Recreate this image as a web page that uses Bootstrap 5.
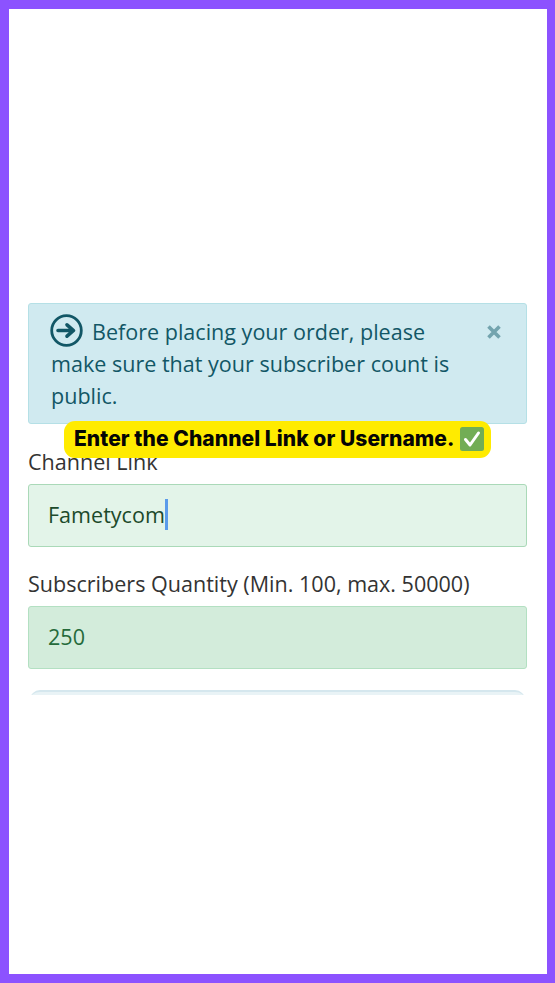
<!DOCTYPE html>
<html lang="en">
<head>
<meta charset="utf-8">
<title>Order form</title>
<link href="https://cdn.jsdelivr.net/npm/bootstrap@5.3.0/dist/css/bootstrap.min.css" rel="stylesheet">
<style>
html,body{height:100%;margin:0;background:#fff}
body{font-family:"Open Sans","Liberation Sans",sans-serif;overflow:hidden}
.frame{height:983px;border:9px solid #8c52ff;border-right-width:8px;padding:294px 20px 0 19px;position:relative;background:#fff}
.notice{height:121px;margin:0 0 24px;padding:10px 22px 0;border:1px solid #b5e0e6;border-radius:3px;background:#d0eaf0;color:#125766;font-size:21.55px;line-height:32px;position:relative}
.notice-icon{width:33px;height:33px;vertical-align:-7px;margin-right:9px;margin-left:-1px}
.notice-close{position:absolute;right:24px;top:16px;width:16px;height:24px;padding:0;border:0;background:none;display:flex;align-items:center}
.notice-text{max-width:410px}
.tip{position:absolute;left:55px;top:412px;width:427px;height:37px;background:#ffeb00;border-radius:11px;color:#050505;font-family:Inter,"Liberation Sans",sans-serif;font-weight:800;font-size:21px;letter-spacing:.06px;padding:0 0 1px 10px;display:flex;align-items:center;gap:5px;white-space:nowrap}
.field-label{display:block;color:#333;font-size:21.55px;line-height:28px;margin:0 0 8px}
.field{display:block;width:100%;height:63px;border-radius:3px;padding:0 19px;font-size:21.55px;line-height:60px}
.field-a{background:#e3f4e9;border:1.5px solid #aad9b8;color:#1c4a2b;margin-bottom:23px}
.field-b{background:#d3ecdb;border:1.5px solid #b3e0c2;color:#256a3a}
.caret-mark{display:inline-block;width:3px;height:31px;background:#5b9bea;vertical-align:-7px}
.clip-box{height:5px;margin-top:21px;padding:0 2px;overflow:hidden}
.clip-box>div{height:30px;border-radius:10px;background:#e9f3f6;border-top:2px solid #d5e7ee}
</style>
</head>
<body>
<div class="frame">
  <div class="alert notice" role="alert">
    <div class="notice-text"><svg class="notice-icon" viewBox="0 0 33 33"><circle cx="16.5" cy="16.5" r="14.8" fill="none" stroke="#125766" stroke-width="2.8"/><path d="M8 16.5H22M17 10.8L23.5 16.5L17 22.2" fill="none" stroke="#125766" stroke-width="3.6" stroke-linecap="round" stroke-linejoin="round"/></svg>Before placing your order, please make sure that your subscriber count is public.</div>
    <button class="notice-close" type="button" aria-label="Close"><svg width="16" height="16" viewBox="0 0 16 16"><path d="M2.5 2.5L13.5 13.5M13.5 2.5L2.5 13.5" stroke="#73a4ae" stroke-width="3.6"/></svg></button>
  </div>
  <div class="tip">Enter the Channel Link or Username.<svg width="24" height="24" viewBox="0 0 24 24"><rect width="24" height="24" rx="2.5" fill="#72ad55"/><path d="M5.5 12.5L10 18L18.5 6" fill="none" stroke="#fff" stroke-width="3" stroke-linecap="round" stroke-linejoin="round"/></svg></div>
  <form>
    <label class="field-label">Channel Link</label>
    <div class="field field-a">Fametycom<span class="caret-mark"></span></div>
    <label class="field-label">Subscribers Quantity (Min. 100, max. 50000)</label>
    <div class="field field-b">250</div>
    <div class="clip-box"><div></div></div>
  </form>
</div>
</body>
</html>
